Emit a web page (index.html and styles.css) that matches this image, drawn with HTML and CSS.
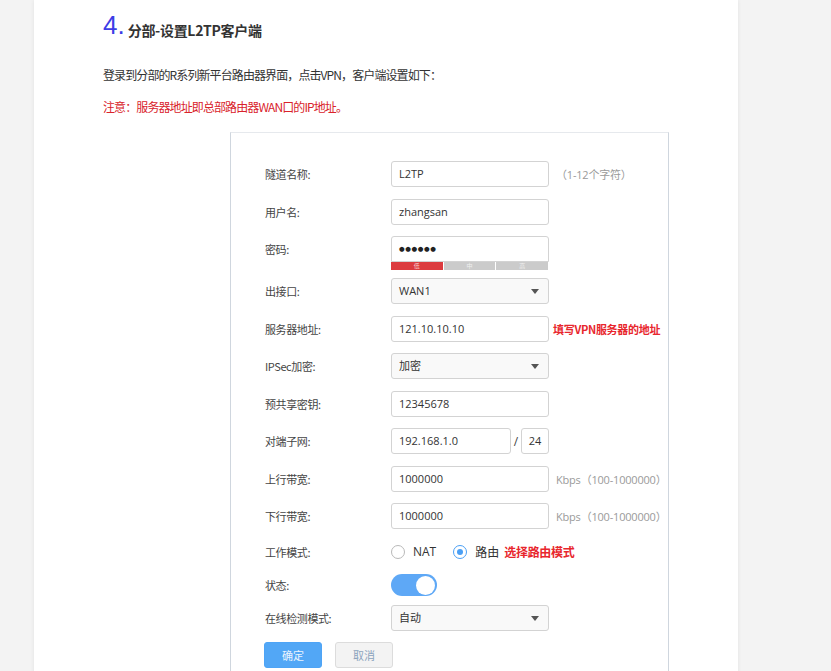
FILE: index.html
```html
<!DOCTYPE html>
<html lang="zh-CN">
<head>
<meta charset="utf-8">
<title>分部-设置L2TP客户端</title>
<link rel="stylesheet" href="styles.css">
</head>
<body>
<div class="page">
  <h2 class="title"><span class="num">4.</span><span class="title-text">分部-设置L2TP客户端</span></h2>
  <p class="intro">登录到分部的R系列新平台路由器界面，点击VPN，客户端设置如下：</p>
  <p class="notice">注意：服务器地址即总部路由器WAN口的IP地址。</p>

  <div class="panel">
    <div class="row">
      <div class="label">隧道名称:</div>
      <div class="field"><div class="input">L2TP</div></div>
      <div class="hint">（1-12个字符）</div>
    </div>
    <div class="row">
      <div class="label">用户名:</div>
      <div class="field"><div class="input">zhangsan</div></div>
    </div>
    <div class="row row-pwd">
      <div class="label">密码:</div>
      <div class="field">
        <div class="input pwd">●●●●●●</div>
        <div class="strength">
          <span class="seg seg-low">低</span>
          <span class="seg">中</span>
          <span class="seg">高</span>
        </div>
      </div>
    </div>
    <div class="row">
      <div class="label">出接口:</div>
      <div class="field"><div class="input select">WAN1<span class="arrow"></span></div></div>
    </div>
    <div class="row">
      <div class="label">服务器地址:</div>
      <div class="field"><div class="input">121.10.10.10</div></div>
      <div class="note">填写VPN服务器的地址</div>
    </div>
    <div class="row">
      <div class="label">IPSec加密:</div>
      <div class="field"><div class="input select">加密<span class="arrow"></span></div></div>
    </div>
    <div class="row">
      <div class="label">预共享密钥:</div>
      <div class="field"><div class="input">12345678</div></div>
    </div>
    <div class="row">
      <div class="label">对端子网:</div>
      <div class="field subnet">
        <div class="input ip">192.168.1.0</div>
        <span class="slash">/</span>
        <div class="input mask">24</div>
      </div>
    </div>
    <div class="row">
      <div class="label">上行带宽:</div>
      <div class="field"><div class="input">1000000</div></div>
      <div class="hint unit">Kbps（100-1000000）</div>
    </div>
    <div class="row">
      <div class="label">下行带宽:</div>
      <div class="field"><div class="input">1000000</div></div>
      <div class="hint unit">Kbps（100-1000000）</div>
    </div>
    <div class="row row-radio">
      <div class="label">工作模式:</div>
      <div class="radios">
        <span class="radio"></span><span class="radio-text">NAT</span>
        <span class="radio checked"></span><span class="radio-text">路由</span>
        <span class="note note-inline">选择路由模式</span>
      </div>
    </div>
    <div class="row row-toggle">
      <div class="label">状态:</div>
      <div class="toggle"><span class="knob"></span></div>
    </div>
    <div class="row">
      <div class="label">在线检测模式:</div>
      <div class="field"><div class="input select">自动<span class="arrow"></span></div></div>
    </div>
    <div class="buttons">
      <button class="btn btn-ok">确定</button>
      <button class="btn btn-cancel">取消</button>
    </div>
  </div>
</div>
</body>
</html>
```
FILE: styles.css
```css
html, body {
  margin: 0;
  padding: 0;
  background: #f3f3f3;
}
body {
  font-family: "Noto Sans", "Noto Sans CJK SC", sans-serif;
  color: #333;
  overflow: hidden;
}
.page {
  margin-left: 34px;
  width: 704px;
  min-height: 760px;
  background: #fff;
  box-shadow: 0 0 4px rgba(0, 0, 0, 0.07);
  padding: 12px 0 0 69px;
  box-sizing: border-box;
}
.title {
  margin: 0;
  display: flex;
  align-items: baseline;
  height: 26px;
  line-height: 26px;
  font-weight: normal;
}
.num {
  font-family: "Liberation Sans", sans-serif;
  font-size: 26px;
  color: #3d3de6;
  letter-spacing: 0;
  margin-right: 3px;
}
.title-text {
  font-family: "Noto Sans CJK SC", sans-serif;
  font-size: 14px;
  font-weight: 700;
  color: #333;
  letter-spacing: -0.3px;
  position: relative;
  top: 2px;
}
.intro, .notice {
  margin: 0;
  font-family: "Noto Sans CJK SC", sans-serif;
  font-size: 12px;
  line-height: 16px;
  letter-spacing: -0.9px;
}
.intro {
  margin-top: 29px;
  color: #333;
}
.notice {
  margin-top: 16px;
  color: #d9232b;
}
.panel {
  margin-top: 17px;
  margin-left: 127px;
  width: 439px;
  box-sizing: border-box;
  border: 1px solid #cfd6de;
  border-top-color: #e6e9ed;
  border-bottom: none;
  padding: 28px 0 20px 34px;
}
.row {
  display: flex;
  align-items: center;
  height: 26px;
  margin-bottom: 11.5px;
}
.label {
  width: 126px;
  flex: none;
  font-family: "Noto Sans CJK SC", sans-serif;
  font-size: 11px;
  letter-spacing: -0.4px;
  color: #444;
}
.field {
  width: 158px;
  flex: none;
  position: relative;
}
.input {
  height: 26px;
  box-sizing: border-box;
  border: 1px solid #d3d3d3;
  border-radius: 3px;
  background: #fff;
  padding-left: 7px;
  font-family: "Open Sans", "Noto Sans CJK SC", sans-serif;
  font-size: 11px;
  line-height: 24px;
  color: #333;
  position: relative;
}
.pwd {
  font-family: "DejaVu Sans", sans-serif;
  font-size: 6.5px;
  letter-spacing: 0.6px;
  border-radius: 3px 3px 0 0;
  color: #222;
}
.row-pwd {
  height: 34px;
  margin-bottom: 8px;
  align-items: flex-start;
}
.row-pwd .label {
  line-height: 26px;
}
.strength {
  display: flex;
  gap: 1px;
  height: 8px;
  width: 157px;
  background: #fff;
}
.seg {
  flex: 1;
  background: #cbcbcb;
  color: #f0f0f0;
  font-family: "Noto Sans CJK SC", sans-serif;
  font-size: 6px;
  line-height: 8px;
  text-align: center;
}
.seg-low {
  background: #dc3b3f;
  color: #f6c9ca;
}
.select {
  background: #f9f9f9;
}
.arrow {
  position: absolute;
  right: 9px;
  top: 10px;
  width: 0;
  height: 0;
  border-left: 4px solid transparent;
  border-right: 4px solid transparent;
  border-top: 5px solid #555;
}
.hint {
  margin-left: 7px;
  font-family: "Open Sans", "Noto Sans CJK SC", sans-serif;
  font-size: 11px;
  color: #9a9a9a;
  letter-spacing: -0.2px;
}
.unit {
  margin-left: 7px;
}
.note {
  margin-left: 4px;
  font-family: "Noto Sans CJK SC", sans-serif;
  font-size: 11px;
  font-weight: 700;
  color: #e8262d;
  letter-spacing: -0.3px;
}
.subnet {
  display: flex;
  align-items: center;
}
.ip {
  width: 120px;
}
.slash {
  width: 10px;
  text-align: center;
  font-family: "Open Sans", sans-serif;
  font-size: 12px;
  color: #444;
}
.mask {
  width: 28px;
  padding-left: 0;
  text-align: center;
}
.row-radio {
  height: 22px;
}
.radios {
  display: flex;
  align-items: center;
}
.radio {
  width: 14px;
  height: 14px;
  box-sizing: border-box;
  border: 1px solid #b9b9b9;
  border-radius: 50%;
  position: relative;
  margin-right: 8px;
}
.radio.checked {
  border-color: #4a9ff5;
  margin-left: 17px;
}
.radio.checked::after {
  content: "";
  position: absolute;
  left: 3px;
  top: 3px;
  width: 6px;
  height: 6px;
  border-radius: 50%;
  background: #4a9ff5;
}
.radio-text {
  font-family: "Open Sans", "Noto Sans CJK SC", sans-serif;
  font-size: 12px;
  color: #333;
}
.note-inline {
  margin-left: 5px;
  font-size: 12px;
}
.row-toggle {
  height: 22px;
  margin-bottom: 8.5px;
}
.toggle {
  width: 46px;
  height: 22px;
  border-radius: 11px;
  background: #5ea8f6;
  position: relative;
}
.knob {
  position: absolute;
  right: 2px;
  top: 1.5px;
  width: 19px;
  height: 19px;
  border-radius: 50%;
  background: #fff;
}
.buttons {
  display: flex;
  gap: 13px;
  margin-left: -1px;
}
.btn {
  width: 58px;
  height: 26px;
  border-radius: 3px;
  font-family: "Noto Sans CJK SC", sans-serif;
  font-size: 11px;
  padding: 0;
  cursor: pointer;
}
.btn-ok {
  border: 1px solid #4ea4f6;
  background: #52a7f6;
  color: #eaf4fe;
}
.btn-cancel {
  border: 1px solid #dcdcdc;
  background: #f3f3f3;
  color: #8ca3bd;
}
```
